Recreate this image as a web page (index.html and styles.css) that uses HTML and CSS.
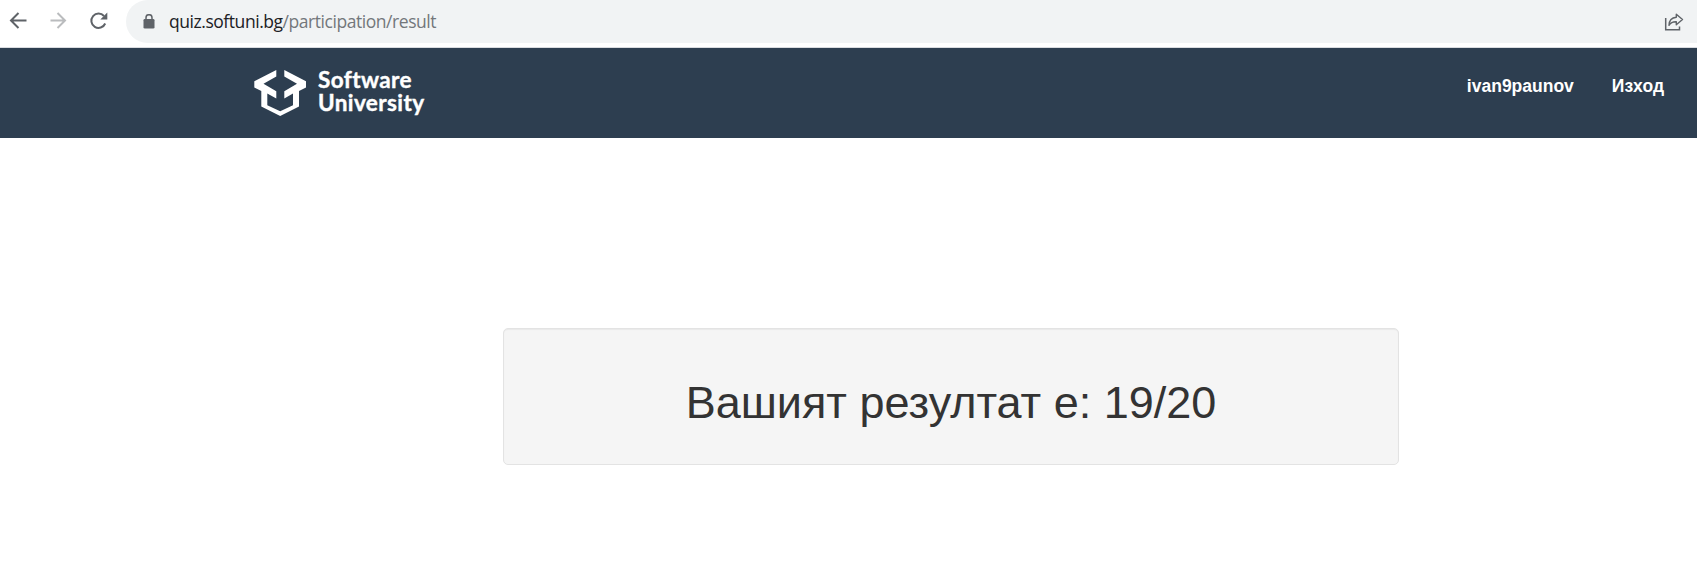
FILE: index.html
```html
<!DOCTYPE html>
<html lang="bg">
<head>
<meta charset="utf-8">
<title>Резултат</title>
<link rel="stylesheet" href="styles.css">
</head>
<body>
<div class="toolbar">
  <div class="nav-icons">
    <svg class="icon" width="20" height="20" viewBox="0 0 20 20"><path d="M18.500 10.500H3M10.500 3L3 10.500L10.500 18" fill="none" stroke="#5f6368" stroke-width="2"/></svg>
    <svg class="icon" width="20" height="20" viewBox="0 0 20 20"><path d="M2.500 10.500H17M9.500 3L17 10.500L9.500 18" fill="none" stroke="#babcbe" stroke-width="2"/></svg>
    <svg class="icon" width="20" height="20" viewBox="0 0 20 20"><path d="M16 6A7.200 7.200 0 1 0 17.200 13.500" fill="none" stroke="#5f6368" stroke-width="2"/><path d="M19.300 2.500V9.500H12.300Z" fill="#5f6368"/></svg>
  </div>
  <div class="address">
    <svg class="lock" width="12" height="15" viewBox="0 0 12 15"><rect x="0.500" y="5" width="11" height="9.500" rx="1.300" fill="#5f6368"/><path d="M3 6V3.700a3 3 0 0 1 6 0V6" fill="none" stroke="#5f6368" stroke-width="1.500"/></svg>
    <div class="url"><span class="host">quiz.softuni.bg</span>/participation/result</div>
    <svg class="share" width="20" height="20" viewBox="0 0 20 20"><path d="M1.700 6V17.800H15.500V14.500" fill="none" stroke="#5f6368" stroke-width="1.500"/><path d="M12.300 2.200L18.500 7.500L12.300 12.800V9.800C9 9.600 6.800 10.500 5 13.300C5.200 8.600 7.500 5.700 12.300 5.300Z" fill="none" stroke="#5f6368" stroke-width="1.400" stroke-linejoin="round"/></svg>
  </div>
</div>
<header class="site-header">
  <div class="brand">
    <svg class="mark" width="53" height="47" viewBox="0 0 53 47"><path fill="#fff" d="M22.300 0V6.500L9.500 13.800L22.300 21.300V28.500L13.300 23.500V35.200L26.200 41.200L39 35.200V23.500L30.300 28.500V21.300L43 13.800L30.300 6.500V0L52 11.300V17.500L45 21V36.500L26.200 46L7.300 36.500V21L0.300 17.500V11.300Z"/></svg>
    <div class="brand-name"><span>Software</span><span>University</span></div>
  </div>
  <nav class="links"><a>ivan9paunov</a><a>Изход</a></nav>
</header>
<main class="content">
  <div class="well"><h1 class="result">Вашият резултат е: 19/20</h1></div>
</main>
</body>
</html>
```
FILE: styles.css
```css
body { margin: 0; background: #fff; font-family: "Liberation Sans", Arial, sans-serif; }
svg { display: block; flex: none; }
.toolbar { display: flex; height: 47px; border-bottom: 1px solid #dadce0; background: #fff; }
.nav-icons { display: flex; gap: 20px; width: 118px; padding: 10px 0 0 8px; flex: none; }
.address { display: flex; flex: 1; height: 43px; background: #f1f3f4; border-radius: 22px 0 0 22px; }
.lock { margin: 14px 14px 0 17px; }
.url { font: 17.5px/43px "Open Sans", sans-serif; letter-spacing: -0.45px; color: #73777b; white-space: nowrap; flex: 1; }
.host { color: #202124; }
.share { margin: 12px 13px 0 0; }
.site-header { display: flex; justify-content: space-between; height: 90px; background: #2d3e50; }
.brand { display: flex; padding: 22px 0 0 254px; }
.brand-name { display: flex; flex-direction: column; gap: 1px; margin: -1px 0 0 11px; font: bold 22.5px/22px Lato, sans-serif; letter-spacing: 0.4px; color: #fff; -webkit-text-stroke: 0.4px #fff; }
.links { display: flex; gap: 38px; padding: 26px 33px 0 0; font-size: 17.5px; line-height: 25px; font-weight: bold; color: #fff; }
.content { padding: 190px 298px 0 503px; }
.well { box-sizing: border-box; height: 137px; padding: 49px 24px 0; border: 1px solid #e3e3e3; border-radius: 5px; background: #f5f5f5; box-shadow: inset 0 1px 1px rgba(0, 0, 0, .05); }
.result { margin: 0; font-size: 45px; line-height: 50px; font-weight: normal; color: #333; text-align: center; white-space: nowrap; }
```
